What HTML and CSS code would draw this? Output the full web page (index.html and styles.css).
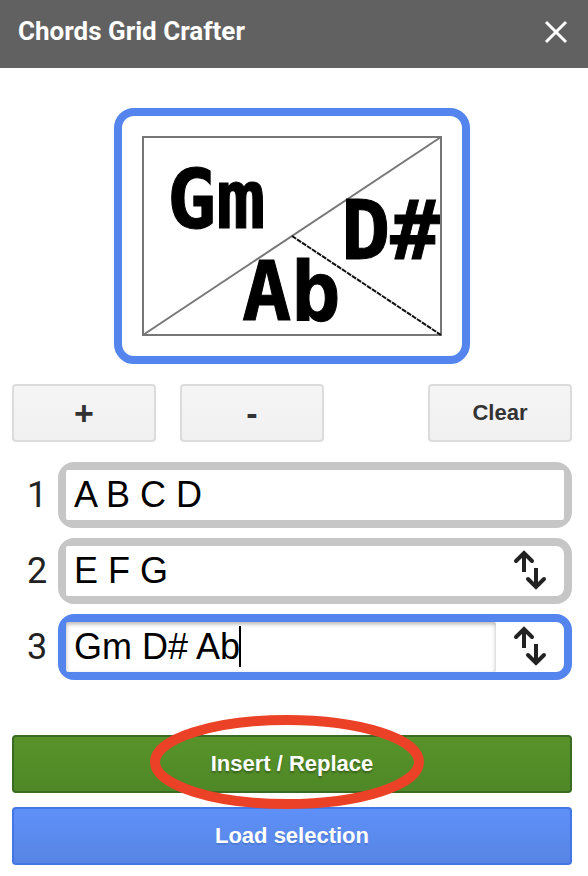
FILE: index.html
```html
<!DOCTYPE html>
<html lang="en">
<head>
<meta charset="utf-8">
<meta name="viewport" content="width=device-width, initial-scale=1">
<title>Chords Grid Crafter</title>
<link rel="stylesheet" href="styles.css">
</head>
<body>
<header class="header">
  <h1 class="title">Chords Grid Crafter</h1>
  <button class="close" type="button" aria-label="Close">
    <svg width="24" height="24" viewBox="0 0 24 24" aria-hidden="true"><path d="M2 2 22 22M22 2 2 22" fill="none" stroke="#fff" stroke-width="3"/></svg>
  </button>
</header>
<main class="content">
  <div class="preview">
    <svg class="grid" viewBox="0 0 300 200" role="img" aria-label="Chord preview">
      <rect class="line" x="1" y="1" width="298" height="198"/>
      <path class="line" d="M1 199 299 1"/>
      <path class="dashed" d="M150 100 299 199"/>
      <g class="chord">
        <text x="25" y="92">Gm</text>
        <text x="199" y="123">D#</text>
        <text x="100" y="184">Ab</text>
      </g>
    </svg>
  </div>
  <div class="toolbar">
    <button class="btn btn-sign" type="button">+</button>
    <button class="btn btn-sign" type="button">-</button>
    <button class="btn btn-end" type="button">Clear</button>
  </div>
  <div class="rows">
    <div class="row">
      <label class="num" for="row1">1</label>
      <div class="field"><input id="row1" class="chords" type="text" value="A B C D"></div>
    </div>
    <div class="row">
      <label class="num" for="row2">2</label>
      <div class="field">
        <input id="row2" class="chords" type="text" value="E F G">
        <button class="swap" type="button" aria-label="Swap with row above">
          <svg width="34" height="42" viewBox="0 0 34 42" aria-hidden="true"><path class="stem" d="M11 22V4M23 18V36"/><path class="head" d="M3 11 11 3 19 11M15 29 23 37 31 29"/></svg>
        </button>
      </div>
    </div>
    <div class="row">
      <label class="num" for="row3">3</label>
      <div class="field active">
        <input id="row3" class="chords" type="text" value="Gm D# Ab">
        <span class="caret"></span>
        <button class="swap" type="button" aria-label="Swap with row above">
          <svg width="34" height="42" viewBox="0 0 34 42" aria-hidden="true"><path class="stem" d="M11 22V4M23 18V36"/><path class="head" d="M3 11 11 3 19 11M15 29 23 37 31 29"/></svg>
        </button>
      </div>
    </div>
  </div>
  <div class="actions">
    <div class="highlighted">
      <button class="btn create" type="button">Insert / Replace</button>
      <svg class="ring" width="274" height="94" viewBox="0 0 274 94" aria-hidden="true"><ellipse cx="137" cy="47" rx="132" ry="42"/></svg>
    </div>
    <button class="btn action" type="button">Load selection</button>
  </div>
</main>
</body>
</html>
```
FILE: styles.css
```css
* { box-sizing: border-box; }

body {
  margin: 0;
  background: #fff;
  color: #222;
  font-family: "Liberation Sans", Arial, sans-serif;
}

button, input { font-family: inherit; margin: 0; }

.header {
  display: flex;
  align-items: center;
  justify-content: space-between;
  height: 68px;
  padding: 0 20px 6px 18px;
  background: #616161;
}

.title {
  margin: 0;
  color: #fff;
  font: 700 26px/32px Roboto, sans-serif;
}

.close {
  display: flex;
  padding: 2px 0 0;
  border: 0;
  background: none;
}

.content {
  display: flex;
  flex-direction: column;
  gap: 20px;
  padding: 40px 16px 10px 12px;
}

.preview {
  align-self: center;
  padding: 20px;
  border: 8px solid #5484ed;
  border-radius: 20px;
}

.grid { display: block; width: 300px; overflow: visible; }

.line { fill: none; stroke: #777; stroke-width: 2; }

.dashed { stroke: #111; stroke-width: 2; stroke-dasharray: 5 1; }

.chord {
  fill: #000;
  stroke: #000;
  stroke-width: 1;
  font: 700 82px "DejaVu Sans Mono", monospace;
}

.toolbar { display: flex; gap: 24px; }

.btn {
  width: 144px;
  height: 58px;
  padding: 0;
  border: 2px solid #dcdcdc;
  border-radius: 4px;
  background: linear-gradient(#f5f5f5, #f1f1f1);
  color: #333;
  font-size: 22px;
  font-weight: 700;
  line-height: 26px;
}

.btn-sign { font-size: 34px; }

.btn-end { margin-left: auto; }

.rows { display: flex; flex-direction: column; gap: 10px; }

.row { display: flex; align-items: center; }

.num {
  width: 46px;
  padding-left: 4px;
  font: 36px/42px Roboto, sans-serif;
  text-align: center;
}

.field {
  position: relative;
  display: flex;
  flex: 1;
  min-width: 0;
  height: 66px;
  border: 8px solid #c6c6c6;
  border-radius: 16px;
}

.active { border-color: #5484ed; }

.chords {
  flex: 1;
  min-width: 0;
  height: 50px;
  padding: 0 8px;
  border: 0;
  border-radius: 2px;
  background: #fff;
  color: #000;
  font-size: 36px;
  outline: none;
}

.active .chords {
  box-shadow: inset 0 2px 4px rgba(0, 0, 0, 0.3);
}

.caret {
  position: absolute;
  top: 4px;
  left: 173px;
  width: 2px;
  height: 41px;
  background: #000;
}

.swap {
  display: flex;
  align-items: center;
  justify-content: center;
  width: 68px;
  padding: 0;
  border: 0;
  background: none;
}

.swap path {
  fill: none;
  stroke: #222;
  stroke-width: 4;
}

.swap .head { stroke-linecap: round; }

.actions {
  display: flex;
  flex-direction: column;
  gap: 14px;
  margin-top: 35px;
}

.actions .btn { display: block; width: 100%; color: #fff; }

.highlighted { position: relative; }

.actions .create {
  border-color: #3a6b22;
  background: linear-gradient(#579329, #4f8827);
  text-shadow: 0 2px 2px rgba(0, 0, 0, 0.3);
}

.actions .action {
  border-color: #4477e6;
  background: linear-gradient(#5e90f8, #5785e4);
  text-shadow: 0 2px rgba(0, 0, 0, 0.1);
}

.ring {
  position: absolute;
  top: -20px;
  left: calc(50% - 142px);
  pointer-events: none;
}

.ring ellipse { fill: none; stroke: #eb4227; stroke-width: 10; }
```
